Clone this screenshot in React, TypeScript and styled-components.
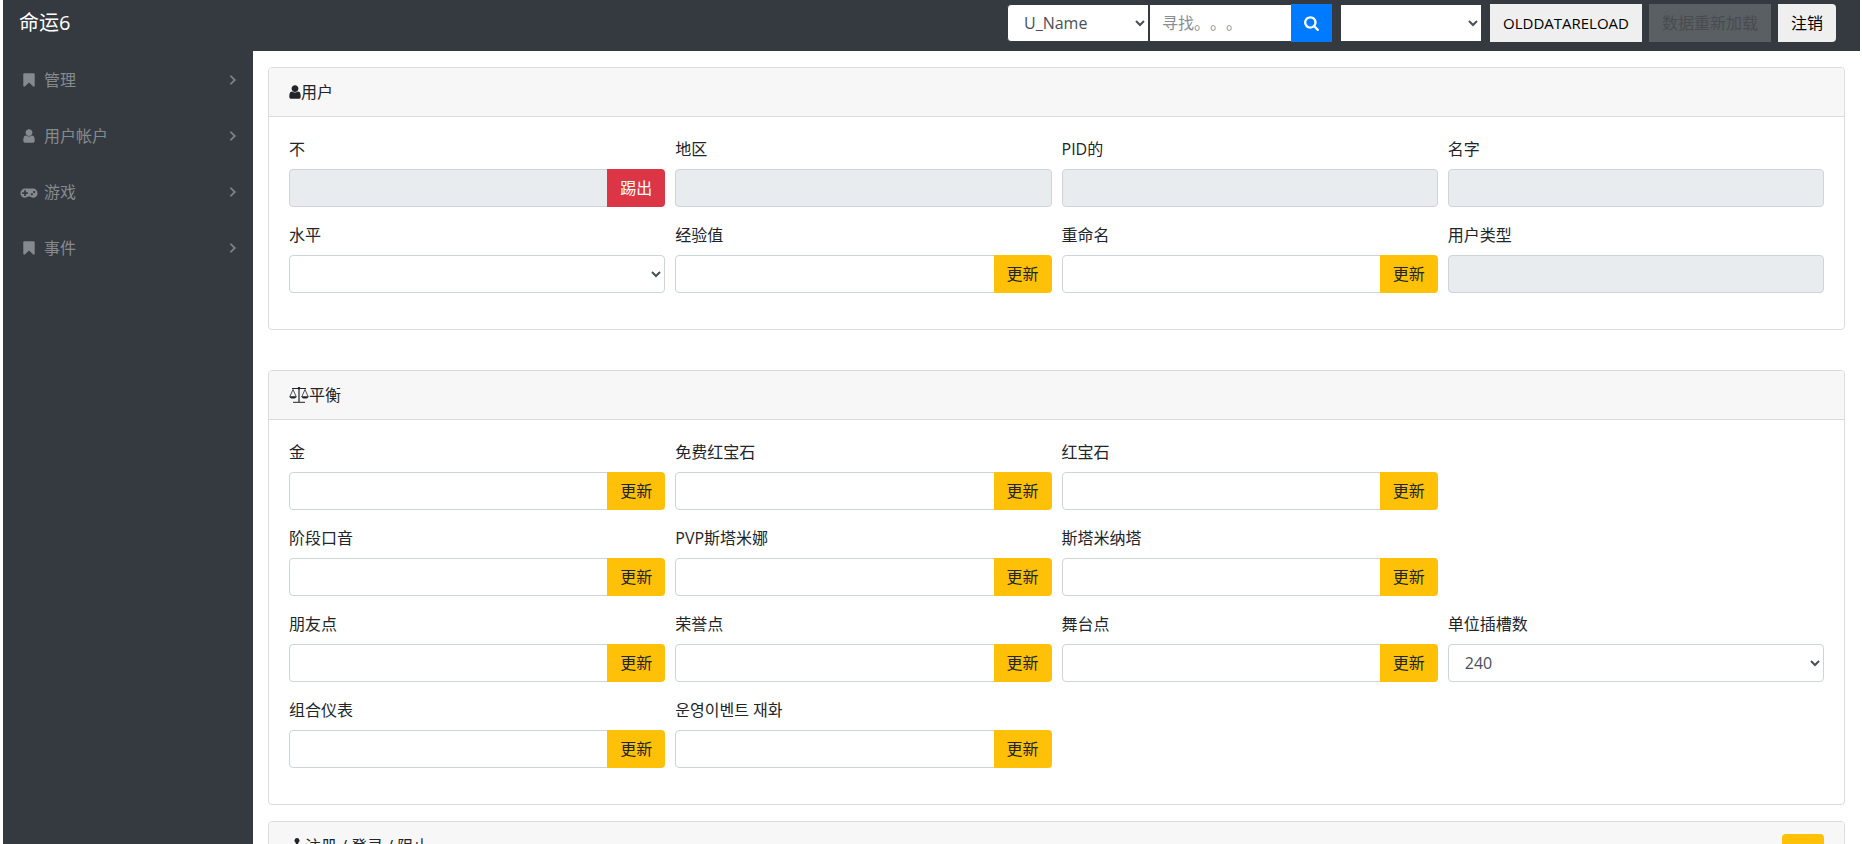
import React, { useId } from 'react';
import styled, { createGlobalStyle, css } from 'styled-components';

const GlobalStyle = createGlobalStyle`
  *, *::before, *::after { box-sizing: border-box; }
  body {
    margin: 0;
    background: #fff;
    color: #212529;
    font-family: "Open Sans", "Noto Sans CJK SC", "Noto Sans CJK KR", sans-serif;
    font-size: 16px;
    line-height: 24px;
    text-spacing-trim: space-all;
  }
  button, input, select { font: inherit; margin: 0; }
`;

const Shell = styled.div`
  display: flex;
  flex-direction: column;
  height: 100vh;
  overflow: hidden;
  padding: 0 2px 0 3px;
`;

const Navbar = styled.header`
  display: flex;
  flex: none;
  align-items: flex-start;
  justify-content: space-between;
  padding: 4px 24px 9px 16px;
  background: #343a40;
`;

const Brand = styled.a`
  color: #fff;
  font-size: 20px;
  line-height: 38px;
  text-decoration: none;
`;

const Tools = styled.form`
  display: flex;
  gap: 7px;
`;

const ToolGroup = styled.div`
  display: flex;
  margin-right: 1px;
`;

const control = css`
  min-width: 0;
  height: 38px;
  padding: 6px 12px;
  border: 1px solid #ced4da;
  border-radius: 4px;
  background: #fff;
  color: #495057;
`;

const NavSelect = styled.select<{ $first?: boolean }>`
  ${control}
  width: 142px;
  border-color: #343a40;
  border-radius: ${(p) => (p.$first ? '4px 0 0 4px' : '0')};
`;

const NavInput = styled.input`
  ${control}
  width: 143px;
  border-color: #343a40;
  border-radius: 0;
  text-spacing-trim: space-all;
  &::placeholder { color: #868e96; opacity: 1; text-spacing-trim: space-all; }
`;

const SearchButton = styled.button`
  display: flex;
  align-items: center;
  justify-content: center;
  width: 41px;
  height: 38px;
  margin-left: -1px;
  padding: 0;
  border: 0;
  background: #007bff;
  color: #fff;
`;

const NavButton = styled.button<{ $width: number; $latin?: boolean; $last?: boolean }>`
  width: ${(p) => p.$width}px;
  height: 38px;
  padding: 0;
  border: 0;
  border-radius: ${(p) => (p.$last ? '0 4px 4px 0' : '0')};
  background: #efefef;
  color: #000;
  font-size: ${(p) => (p.$latin ? 15 : 16)}px;
  white-space: nowrap;
  &:disabled { background: #5a5f63; color: #484c50; }
`;

const Body = styled.div`
  display: flex;
  flex: 1;
  min-height: 0;
`;

const Sidebar = styled.nav`
  flex: none;
  width: 250px;
  padding-top: 1px;
  background: #343a40;
`;

const SideLink = styled.a`
  display: flex;
  align-items: center;
  gap: 5px;
  padding: 16px;
  color: #868a8f;
  text-decoration: none;
`;

const SideIcon = styled.span`
  display: flex;
  justify-content: center;
  width: 20px;
`;

const SideText = styled.span`
  flex: 1;
`;

const Main = styled.main`
  flex: 1;
  min-width: 0;
  padding: 16px 15px;
  overflow-y: auto;
  scrollbar-width: none;
`;

const Card = styled.section<{ $gap?: number }>`
  margin-bottom: ${(p) => p.$gap ?? 16}px;
  border: 1px solid #dadbdc;
  border-radius: 4px;
`;

const CardHeader = styled.header`
  display: flex;
  justify-content: space-between;
  padding: 12px 20px;
  border-bottom: 1px solid #dadbdc;
  border-radius: 3px 3px 0 0;
  background: #f7f7f7;
`;

const CardTitle = styled.h2`
  display: flex;
  align-items: center;
  height: 24px;
  margin: 0;
  font-size: 16px;
  font-weight: 400;
  line-height: 24px;
`;

const HeaderButton = styled.button`
  display: flex;
  align-items: center;
  justify-content: center;
  width: 42px;
  height: 38px;
  padding: 0;
  border: 0;
  border-radius: 4px;
  background: #ffc107;
  color: #212529;
`;

const CardBody = styled.div`
  display: grid;
  gap: 16px;
  padding: 20px 20px 36px;
`;

const FormRow = styled.div`
  display: grid;
  grid-template-columns: repeat(4, minmax(0, 1fr));
  gap: 10px;
`;

const Group = styled.div`
  display: flex;
  flex-direction: column;
  gap: 8px;
`;

const Label = styled.label`
  height: 24px;
`;

const InputGroup = styled.div`
  display: flex;
`;

const Input = styled.input<{ $joined: boolean }>`
  ${control}
  flex: 1;
  border-radius: ${(p) => (p.$joined ? '4px 0 0 4px' : '4px')};
  &:disabled { background: #e9ecef; }
`;

const Select = styled.select`
  ${control}
  width: 100%;
`;

const Append = styled.button<{ $danger: boolean }>`
  width: 58px;
  height: 38px;
  margin-left: -1px;
  padding: 0;
  border: 0;
  border-radius: 0 4px 4px 0;
  background: ${(p) => (p.$danger ? '#dc3545' : '#ffc107')};
  color: ${(p) => (p.$danger ? '#fff' : '#212529')};
`;

const Svg = styled.svg`
  display: block;
  flex: none;
  fill: currentColor;
`;

const paths = {
  user: 'M1536 1399q0 109-62.5 187t-150.5 78h-854q-88 0-150.5-78t-62.5-187q0-85 8.5-160.5t31.5-152 58.5-131 94-89 134.5-34.5q131 128 313 128t313-128q76 0 134.5 34.5t94 89 58.5 131 31.5 152 8.5 160.5zm-256-887q0 159-112.5 271.5t-271.5 112.5-271.5-112.5-112.5-271.5 112.5-271.5 271.5-112.5 271.5 112.5 112.5 271.5z',
  bookmark: 'M1420 128q23 0 44 9 33 13 52.5 41t19.5 62v1289q0 34-19.5 62t-52.5 41q-19 8-44 8-48 0-83-32l-441-424-441 424q-36 33-83 33-23 0-44-9-33-13-52.5-41t-19.5-62v-1289q0-34 19.5-62t52.5-41q21-9 44-9h1048z',
  search: 'M1216 832q0-185-131.5-316.5t-316.5-131.5-316.5 131.5-131.5 316.5 131.5 316.5 316.5 131.5 316.5-131.5 131.5-316.5zm512 832q0 52-38 90t-90 38q-54 0-90-38l-343-342q-179 124-399 124-143 0-273.5-55.5t-225-150-150-225-55.5-273.5 55.5-273.5 150-225 225-150 273.5-55.5 273.5 55.5 225 150 150 225 55.5 273.5q0 220-124 399l343 343q37 37 37 90z',
  angle: 'M1171 960q0 13-10 23l-466 466q-10 10-23 10t-23-10l-50-50q-10-10-10-23t10-23l393-393-393-393q-10-10-10-23t10-23l50-50q10-10 23-10t23 10l466 466q10 10 10 23z',
  gamepad: 'M832 1088v-128q0-14-9-23t-23-9h-192v-192q0-14-9-23t-23-9h-128q-14 0-23 9t-9 23v192h-192q-14 0-23 9t-9 23v128q0 14 9 23t23 9h192v192q0 14 9 23t23 9h128q14 0 23-9t9-23v-192h192q14 0 23-9t9-23zm576 64q0-53-37.5-90.5t-90.5-37.5-90.5 37.5-37.5 90.5 37.5 90.5 90.5 37.5 90.5-37.5 37.5-90.5zm256-256q0-53-37.5-90.5t-90.5-37.5-90.5 37.5-37.5 90.5 37.5 90.5 90.5 37.5 90.5-37.5 37.5-90.5zm256 128q0 212-150 362t-362 150q-192 0-338-128h-220q-146 128-338 128-212 0-362-150t-150-362 150-362 362-150h896q212 0 362 150t150 362z',
};

type IconProps = { name: keyof typeof paths; width?: number; box?: string; bold?: boolean };

const Icon = ({ name, width = 16, box = '0 0 1792 1792', bold }: IconProps) => (
  <Svg width={width} height={16} viewBox={box} aria-hidden="true">
    <path d={paths[name]} stroke={bold ? 'currentColor' : 'none'} strokeWidth={70} />
  </Svg>
);

const ScaleIcon = () => (
  <Svg width={20} height={18} viewBox="0 0 20 18" aria-hidden="true">
    <g fill="none" stroke="currentColor" strokeWidth="0.8">
      <path d="M3 2.500h14M4 16.300h12" strokeWidth="1" />
      <path d="M4 3.500L.9 10.500M4 3.500l3.100 7M16 3.500l-3.100 7M16 3.500l3.100 7" />
    </g>
    <path d="M9.400 1h1.200v15H9.400zM.3 10.200h7.400q-.4 2.400-3.700 2.400t-3.700-2.400zM12.300 10.200h7.400q-.4 2.400-3.700 2.400t-3.700-2.400z" />
    <circle cx="10" cy="2.300" r="1.300" />
  </Svg>
);

const AnchorIcon = () => (
  <Svg width={16} height={16} viewBox="0 0 16 16" aria-hidden="true">
    <path d="M8 0a2.500 2.500 0 0 1 1.200 4.700V6H12v2H9.200v5.500q2.800-.5 3.800-2.500l-1-1 4-1v4l-1-1q-2 3.500-7 3.500T1 12l-1 1V9l4 1-1 1q1 2 3.800 2.500V8H4V6h2.800V4.700A2.500 2.500 0 0 1 8 0z" />
  </Svg>
);

type FieldProps = {
  label: string;
  action?: string;
  disabled?: boolean;
  options?: string[];
};

const Field = ({ label, action, disabled, options }: FieldProps) => {
  const id = useId();
  return (
    <Group>
      <Label htmlFor={id}>{label}</Label>
      {options ? (
        <Select id={id}>
          {options.map((o) => <option key={o}>{o}</option>)}
        </Select>
      ) : (
        <InputGroup>
          <Input id={id} type="text" disabled={disabled} $joined={!!action} />
          {action && <Append type="button" $danger={action === '踢出'}>{action}</Append>}
        </InputGroup>
      )}
    </Group>
  );
};

const update = '更新';

const userRows: FieldProps[][] = [
  [
    { label: '不', action: '踢出', disabled: true },
    { label: '地区', disabled: true },
    { label: 'PID的', disabled: true },
    { label: '名字', disabled: true },
  ],
  [
    { label: '水平', options: [''] },
    { label: '经验值', action: update },
    { label: '重命名', action: update },
    { label: '用户类型', disabled: true },
  ],
];

const balanceRows: FieldProps[][] = [
  [
    { label: '金', action: update },
    { label: '免费红宝石', action: update },
    { label: '红宝石', action: update },
  ],
  [
    { label: '阶段口音', action: update },
    { label: 'PVP斯塔米娜', action: update },
    { label: '斯塔米纳塔', action: update },
  ],
  [
    { label: '朋友点', action: update },
    { label: '荣誉点', action: update },
    { label: '舞台点', action: update },
    { label: '单位插槽数', options: ['240'] },
  ],
  [
    { label: '组合仪表', action: update },
    { label: '운영이벤트 재화', action: update },
  ],
];

const Rows = ({ rows }: { rows: FieldProps[][] }) => (
  <CardBody>
    {rows.map((row, i) => (
      <FormRow key={i}>
        {row.map((f) => <Field key={f.label} {...f} />)}
      </FormRow>
    ))}
  </CardBody>
);

const menu: { label: string; icon: keyof typeof paths }[] = [
  { label: '管理', icon: 'bookmark' },
  { label: '用户帐户', icon: 'user' },
  { label: '游戏', icon: 'gamepad' },
  { label: '事件', icon: 'bookmark' },
];

export default function App() {
  return (
    <>
      <GlobalStyle />
      <Shell>
        <Navbar>
          <Brand href="#">命运6</Brand>
          <Tools onSubmit={(e) => e.preventDefault()}>
            <ToolGroup>
              <NavSelect $first aria-label="搜索字段"><option>U_Name</option></NavSelect>
              <NavInput type="text" placeholder="寻找。。。" aria-label="寻找" />
              <SearchButton type="submit" aria-label="搜索"><Icon name="search" width={17} /></SearchButton>
            </ToolGroup>
            <ToolGroup>
              <NavSelect aria-label="搜索结果"><option /></NavSelect>
            </ToolGroup>
            <NavButton type="button" $width={152} $latin>OLDDATARELOAD</NavButton>
            <NavButton type="button" $width={122} disabled>数据重新加载</NavButton>
            <NavButton type="button" $width={58} $last>注销</NavButton>
          </Tools>
        </Navbar>
        <Body>
          <Sidebar>
            {menu.map((m) => (
              <SideLink key={m.label} href="#">
                <SideIcon>
                  {m.icon === 'gamepad'
                    ? <Icon name="gamepad" width={18} box="0 0 1920 1792" />
                    : <Icon name={m.icon} />}
                </SideIcon>
                <SideText>{m.label}</SideText>
                <Icon name="angle" width={8} box="448 64 896 1792" bold />
              </SideLink>
            ))}
          </Sidebar>
          <Main>
            <Card $gap={40}>
              <CardHeader>
                <CardTitle><Icon name="user" width={12} box="224 0 1344 1792" />用户</CardTitle>
              </CardHeader>
              <Rows rows={userRows} />
            </Card>
            <Card>
              <CardHeader>
                <CardTitle><ScaleIcon />平衡</CardTitle>
              </CardHeader>
              <Rows rows={balanceRows} />
            </Card>
            <Card>
              <CardHeader>
                <CardTitle><AnchorIcon />注册 / 登录 / 阻止</CardTitle>
                <HeaderButton type="button" aria-label="搜索"><Icon name="search" /></HeaderButton>
              </CardHeader>
            </Card>
          </Main>
        </Body>
      </Shell>
    </>
  );
}
